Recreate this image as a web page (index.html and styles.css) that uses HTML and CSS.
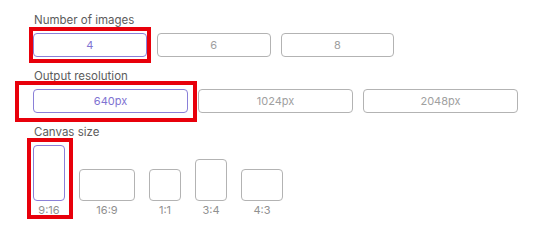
FILE: index.html
```html
<!DOCTYPE html>
<html lang="en">
<head>
<meta charset="utf-8">
<title>Image settings</title>
<link rel="stylesheet" href="styles.css">
</head>
<body>
<div class="page">
  <div class="settings">
    <section class="group">
      <div class="label">Number of images</div>
      <div class="row four">
        <button class="opt selected">4</button>
        <button class="opt">6</button>
        <button class="opt">8</button>
      </div>
    </section>
    <section class="group">
      <div class="label">Output resolution</div>
      <div class="row three">
        <button class="opt selected">640px</button>
        <button class="opt">1024px</button>
        <button class="opt">2048px</button>
      </div>
    </section>
    <section class="group">
      <div class="label">Canvas size</div>
      <div class="canvas-row">
        <div class="ratio"><div class="box r916 selected"></div><span class="cap">9:16</span></div>
        <div class="ratio"><div class="box r169"></div><span class="cap">16:9</span></div>
        <div class="ratio"><div class="box r11"></div><span class="cap">1:1</span></div>
        <div class="ratio"><div class="box r34"></div><span class="cap">3:4</span></div>
        <div class="ratio"><div class="box r43"></div><span class="cap">4:3</span></div>
      </div>
    </section>
  </div>
  <div class="mark m1"></div>
  <div class="mark m2"></div>
  <div class="mark m3"></div>
</div>
</body>
</html>
```

FILE: styles.css
```css
* { box-sizing: border-box; }
html, body { margin: 0; padding: 0; background: #ffffff; }
body { font-family: "Inter", "Noto Sans", sans-serif; color: #5a5a5a; }

.page { position: relative; width: 544px; height: 230px; }

.settings {
  width: 485px;
  margin-left: 33px;
  padding-top: 12px;
  display: flex;
  flex-direction: column;
  gap: 11px;
}

.group { display: flex; flex-direction: column; gap: 5px; }

.label {
  font-size: 11.5px;
  line-height: 16px;
  color: #5c5c5c;
  padding-left: 1px;
}

.row { display: grid; gap: 10px; }
.row.four { grid-template-columns: repeat(4, 1fr); }
.row.three { grid-template-columns: repeat(3, 1fr); }

.opt {
  height: 24px;
  border: 1px solid #b3b3b3;
  border-radius: 4px;
  background: #ffffff;
  font-family: inherit;
  font-size: 11px;
  color: #a0a0a0;
  padding: 0;
}
.opt.selected { border-color: #8a80d8; color: #8073d2; }

.canvas-row { display: flex; align-items: flex-end; gap: 14px; }
.ratio { display: flex; flex-direction: column; align-items: center; gap: 2px; }
.box { border: 1px solid #b3b3b3; border-radius: 4px; }
.box.selected { border-color: #8a80d8; }
.r916 { width: 32px; height: 56px; }
.r169 { width: 56px; height: 32px; }
.r11 { width: 32px; height: 32px; }
.r34 { width: 32px; height: 42px; }
.r43 { width: 42px; height: 32px; }
.cap { font-size: 11px; line-height: 15px; color: #909090; }

.mark { position: absolute; border: 4px solid #e8000b; }
.m1 { left: 29px; top: 27px; width: 122px; height: 36px; }
.m2 { left: 15px; top: 81px; width: 182px; height: 41px; }
.m3 { left: 27px; top: 138px; width: 46px; height: 81px; }
```
